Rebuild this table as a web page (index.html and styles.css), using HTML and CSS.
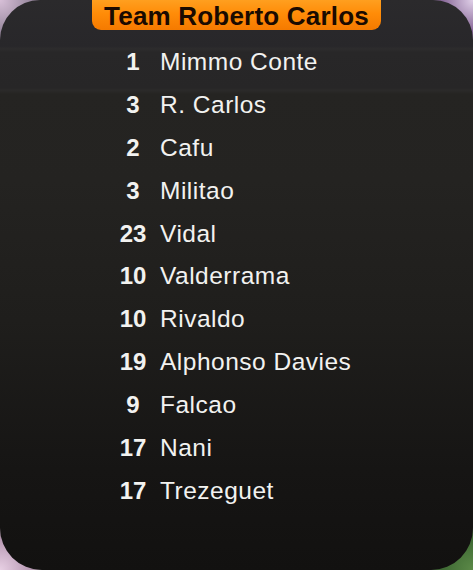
FILE: index.html
```html
<!DOCTYPE html>
<html lang="en">
<head>
<meta charset="utf-8">
<title>Team Roberto Carlos</title>
<link rel="stylesheet" href="styles.css">
</head>
<body>
<div class="panel">
  <div class="title">Team Roberto Carlos</div>
  <ul class="roster">
    <li><span class="num">1</span><span class="name">Mimmo Conte</span></li>
    <li><span class="num">3</span><span class="name">R. Carlos</span></li>
    <li><span class="num">2</span><span class="name">Cafu</span></li>
    <li><span class="num">3</span><span class="name">Militao</span></li>
    <li><span class="num">23</span><span class="name">Vidal</span></li>
    <li><span class="num">10</span><span class="name">Valderrama</span></li>
    <li><span class="num">10</span><span class="name">Rivaldo</span></li>
    <li><span class="num">19</span><span class="name">Alphonso Davies</span></li>
    <li><span class="num">9</span><span class="name">Falcao</span></li>
    <li><span class="num">17</span><span class="name">Nani</span></li>
    <li><span class="num">17</span><span class="name">Trezeguet</span></li>
  </ul>
</div>
</body>
</html>
```

FILE: styles.css
```css
html, body {
  margin: 0;
  padding: 0;
}
body {
  width: 473px;
  height: 570px;
  overflow: hidden;
  font-family: "Liberation Sans", Arial, sans-serif;
  background:
    radial-gradient(circle at 0% 100%, #e8d0e4 0, #b89ab4 30px, rgba(120,100,120,0) 60px),
    radial-gradient(circle at 100% 100%, #5c8a48 0, #3f6a34 30px, rgba(60,100,50,0) 60px),
    radial-gradient(circle at 0% 0%, #d8c0d8 0, #9a8aa0 30px, rgba(120,100,120,0) 60px),
    radial-gradient(circle at 100% 0%, #e0d0e8 0, #8a6a9a 30px, rgba(120,100,120,0) 60px),
    linear-gradient(#6a5a6e, #2a2a2a 40%, #2a2a2a 60%, #3a4a34);
}
.panel {
  height: 570px;
  box-sizing: border-box;
  border-radius: 40px 40px 42px 42px;
  background:
    linear-gradient(180deg,
      #2b2a2c 0px,
      #28272a 46px,
      #2d2c2d 49px,
      #282728 52px,
      #272627 88px,
      #2b2a2a 90px,
      #252422 94px,
      #242321 180px,
      #1f1e1c 320px,
      #161514 470px,
      #121110 570px);
  display: flex;
  flex-direction: column;
  align-items: center;
}
.title {
  width: 289px;
  height: 30px;
  box-sizing: border-box;
  padding-top: 1px;
  background: linear-gradient(180deg, #ff9f1f 0%, #ff8c08 45%, #f57a00 100%);
  border-radius: 0 0 9px 9px;
  color: #1a0a00;
  font-weight: bold;
  font-size: 26px;
  line-height: 30px;
  text-align: center;
  letter-spacing: 0.2px;
}
.roster {
  list-style: none;
  margin: 11px 0 0 0;
  padding: 0 0 0 106px;
  align-self: stretch;
}
.roster li {
  display: grid;
  grid-template-columns: 54px 1fr;
  align-items: baseline;
  height: 42.9px;
  line-height: 42.9px;
  font-size: 24px;
  color: #f2f2f0;
}
.num {
  font-weight: bold;
  text-align: center;
}
.name {
  font-size: 24.5px;
  letter-spacing: 0.5px;
}
```
